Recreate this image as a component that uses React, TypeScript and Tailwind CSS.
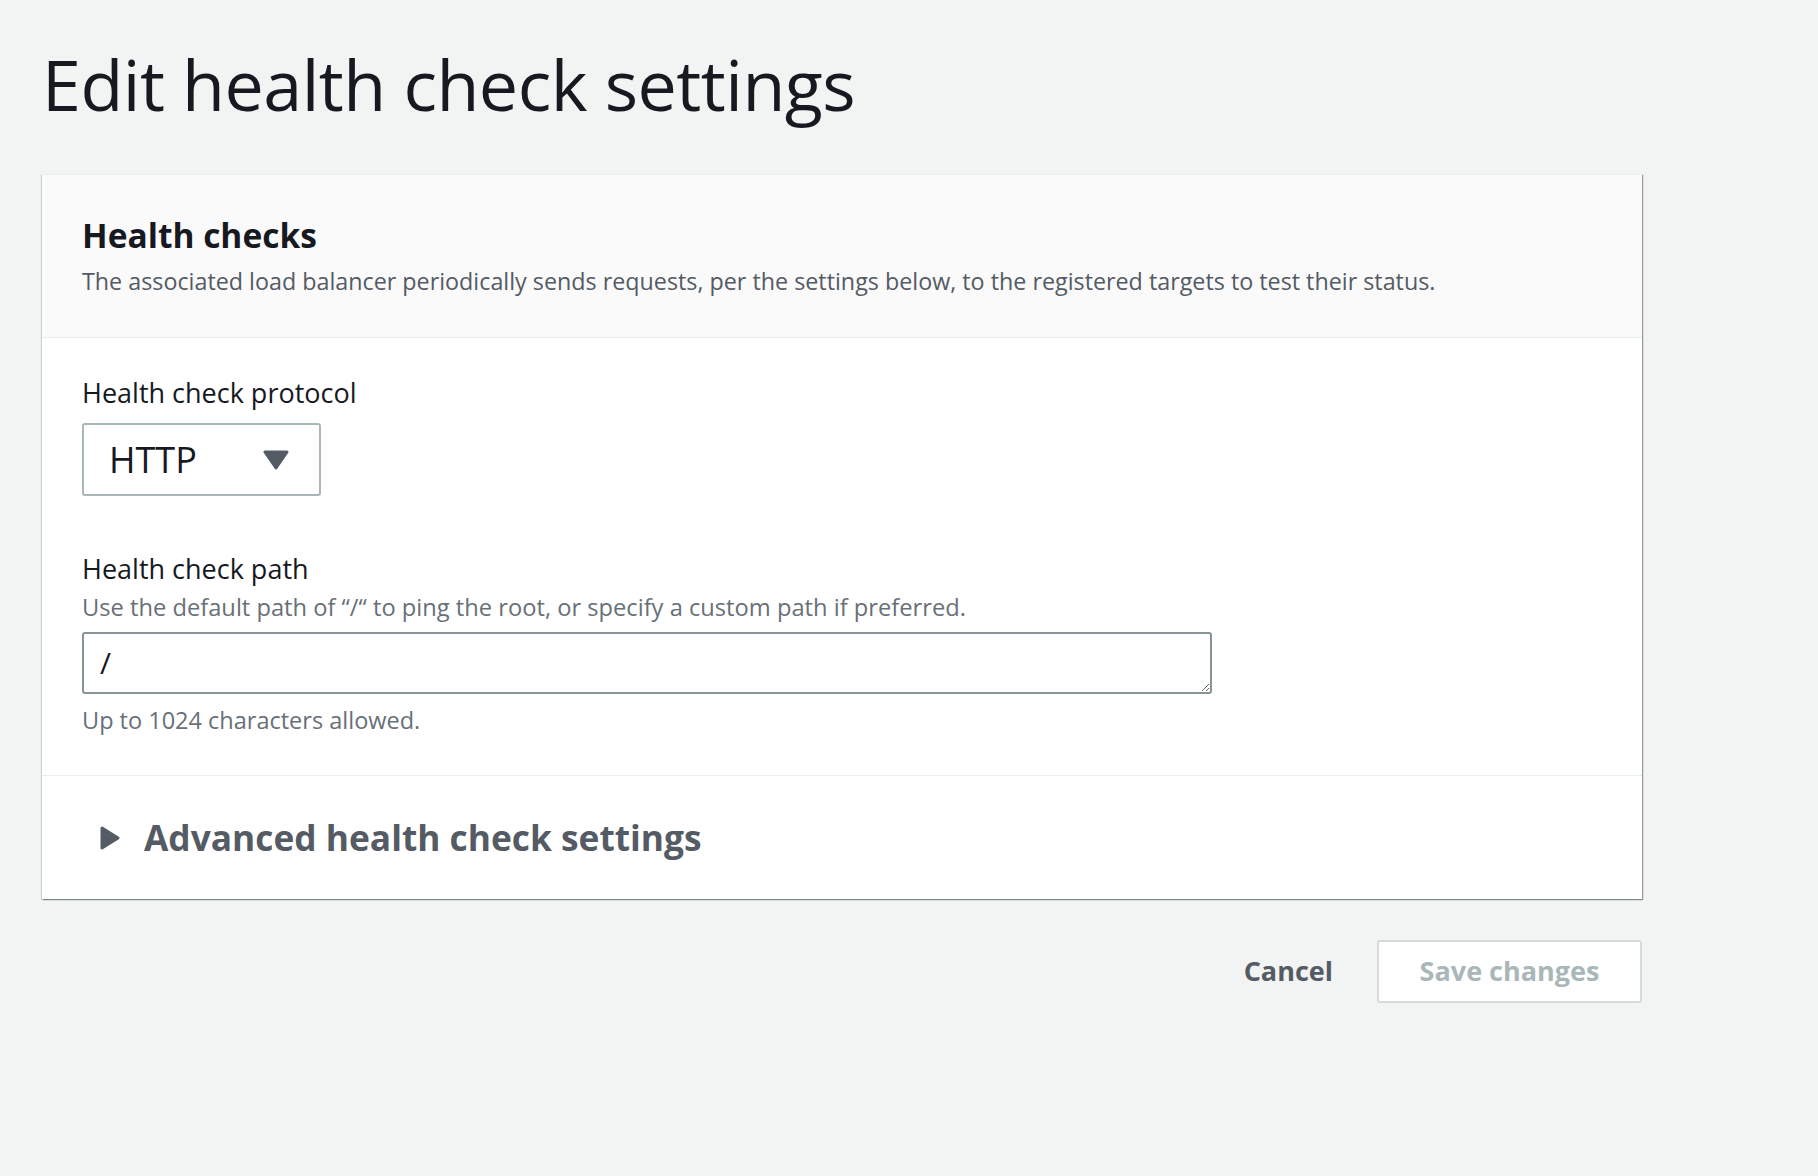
export default function App() {
  return (
    <div className="min-h-screen bg-[#f2f3f3] font-['Open_Sans',sans-serif] text-[#16191f]">
      <div className="w-[1642px] pl-[42px]">
        <h1 className="pt-[44px] text-[70px] leading-[80px] font-normal tracking-[-0.5px]">
          Edit health check settings
        </h1>

        <div className="mt-[50px] bg-white shadow-[1px_1px_1px_0_rgba(0,28,36,0.3),1px_1px_1px_0_rgba(0,28,36,0.15),-1px_1px_1px_0_rgba(0,28,36,0.15)] border-t border-[#eaeded]">
          <div className="bg-[#fafafa] border-b border-[#eaeded] px-[40px] pt-[40px] pb-[42px]">
            <h2 className="text-[33.5px] leading-[40px] font-bold">Health checks</h2>
            <p className="mt-[12px] text-[23.3px] leading-[28px] text-[#545b64]">
              The associated load balancer periodically sends requests, per the settings below, to the registered targets to test their status.
            </p>
          </div>

          <div className="px-[40px] pt-[39px] pb-[41px] border-b border-[#eaeded]">
            <label className="block text-[27px] leading-[32px]">Health check protocol</label>
            <div className="mt-[14px] flex h-[73px] w-[239px] items-center justify-between rounded-[3px] border-2 border-[#aab7b8] pl-[25px] pr-[30px]">
              <span className="text-[36px] leading-[40px]">HTTP</span>
              <svg width="26" height="20" viewBox="0 0 26 20">
                <path d="M2 2 H24 L13 18 Z" fill="#545b64" stroke="#545b64" strokeWidth="3" strokeLinejoin="round" />
              </svg>
            </div>

            <label className="mt-[57px] block text-[27px] leading-[32px]">Health check path</label>
            <p className="mt-[8px] text-[23.7px] leading-[28px] text-[#687078]">
              Use the default path of “/“ to ping the root, or specify a custom path if preferred.
            </p>
            <textarea
              defaultValue="/"
              rows={1}
              className="mt-[11px] block h-[62px] w-[1130px] rounded-[3px] border-2 border-[#879596] px-[16px] py-[10px] text-[30px] leading-[38px] outline-none"
            />
            <p className="mt-[12px] text-[23.5px] leading-[28px] text-[#687078]">Up to 1024 characters allowed.</p>
          </div>

          <div className="flex h-[123px] items-center pl-[57px]">
            <svg width="22" height="26" viewBox="0 0 22 26" className="mr-[23px]">
              <path d="M3 3 L19 13 L3 23 Z" fill="#545b64" stroke="#545b64" strokeWidth="3" strokeLinejoin="round" />
            </svg>
            <span className="text-[35.3px] font-bold text-[#545b64]">Advanced health check settings</span>
          </div>
        </div>

        <div className="mt-[41px] flex items-center justify-end gap-[44px]">
          <button className="text-[27px] font-bold text-[#545b64]">Cancel</button>
          <button className="h-[63px] w-[265px] rounded-[3px] border-2 border-[#d5dbdb] bg-white text-[27px] font-bold text-[#aab7b8]">
            Save changes
          </button>
        </div>
      </div>
    </div>
  );
}
